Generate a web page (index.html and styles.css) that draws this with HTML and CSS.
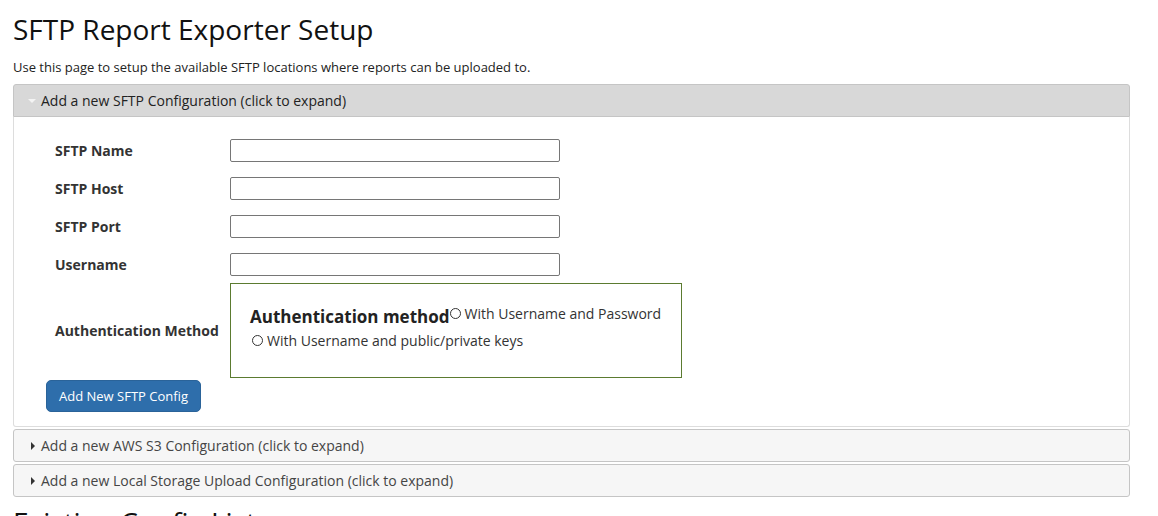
FILE: index.html
```html
<!DOCTYPE html>
<html>
<head>
<meta charset="utf-8">
<link rel="stylesheet" href="styles.css">
</head>
<body>
<div class="page">
  <h1 class="title">SFTP Report Exporter Setup</h1>
  <p class="intro">Use this page to setup the available SFTP locations where reports can be uploaded to.</p>

  <div class="acc">
    <div class="acc-head active"><span class="tri tri-down"></span>Add a new SFTP Configuration (click to expand)</div>
    <div class="acc-body">
      <table class="form">
        <tr><th>SFTP Name</th><td><input class="txt" type="text"></td></tr>
        <tr><th>SFTP Host</th><td><input class="txt" type="text"></td></tr>
        <tr><th>SFTP Port</th><td><input class="txt" type="text"></td></tr>
        <tr><th>Username</th><td><input class="txt" type="text"></td></tr>
        <tr class="auth-row"><th>Authentication Method</th><td>
          <div class="auth">
            <span class="auth-title">Authentication method</span><label class="opt"><span class="radio"></span>With Username and Password</label>
            <label class="opt opt2"><span class="radio"></span>With Username and public/private keys</label>
          </div>
        </td></tr>
      </table>
      <button class="btn">Add New SFTP Config</button>
    </div>
    <div class="acc-head"><span class="tri tri-right"></span>Add a new AWS S3 Configuration (click to expand)</div>
    <div class="acc-head"><span class="tri tri-right"></span>Add a new Local Storage Upload Configuration (click to expand)</div>
  </div>

  <h1 class="title title2">Existing Config List</h1>
</div>
</body>
</html>
```

FILE: styles.css
```css
html, body {
  margin: 0;
  padding: 0;
  background: #fff;
}
body {
  font-family: "Open Sans", "DejaVu Sans", sans-serif;
  color: #222;
}
.page {
  width: 1117px;
  padding: 0 0 0 13px;
}
.title {
  font-size: 28px;
  font-weight: 400;
  color: #111;
  margin: 0;
  padding-top: 11px;
  line-height: 36px;
}
.intro {
  font-size: 13px;
  margin: 12px 0 0 0;
  line-height: 16px;
  color: #222;
}
.acc {
  margin-top: 9px;
}
.acc-head {
  display: flex;
  align-items: center;
  height: 31px;
  border: 1px solid #c5c5c5;
  border-radius: 3px;
  background: #f6f6f6;
  font-size: 14px;
  color: #454545;
  padding-left: 13px;
  margin-top: 2px;
}
.acc-head.active {
  margin-top: 0;
  background: #d8d8d8;
  border-color: #c5c5c5;
  border-radius: 3px 3px 0 0;
  color: #222;
}
.tri {
  display: inline-block;
  width: 0;
  height: 0;
  margin-right: 8px;
}
.tri-down {
  border-left: 4px solid transparent;
  border-right: 4px solid transparent;
  border-top: 4px solid #f4f4f4;
  margin-left: 1px;
  margin-right: 5px;
}
.tri-right {
  border-top: 4px solid transparent;
  border-bottom: 4px solid transparent;
  border-left: 4px solid #333;
  margin-left: 4px;
  margin-right: 6px;
}
.acc-body {
  border: 1px solid #dddddd;
  border-top: 0;
  border-radius: 0 0 3px 3px;
  background: #fff;
  padding: 14px 0 14px 31px;
}
.form {
  border-collapse: separate;
  border-spacing: 0;
}
.form th {
  text-align: left;
  font-size: 14px;
  font-weight: 700;
  color: #333;
  width: 175px;
  padding: 0 0 0 10px;
  height: 38px;
  vertical-align: middle;
}
.form td {
  padding: 0;
  vertical-align: middle;
}
.txt {
  display: block;
  width: 330px;
  height: 23px;
  box-sizing: border-box;
  border: 1px solid #767676;
  border-radius: 2px;
  margin: 0;
  padding: 0 4px;
  font-family: inherit;
}
.auth {
  width: 452px;
  height: 95px;
  box-sizing: border-box;
  border: 1px solid #5b7b30;
  padding: 19px 0 0 19px;
}
.auth-title {
  font-size: 17px;
  font-weight: 700;
  color: #222;
  line-height: 28px;
}
.opt {
  font-size: 14px;
  color: #333;
  display: inline-flex;
  align-items: center;
  position: relative;
  top: -4px;
}
.opt2 {
  display: flex;
  top: 0;
  margin-left: 2px;
}
.radio {
  display: inline-block;
  width: 11px;
  height: 11px;
  box-sizing: border-box;
  border: 1px solid #333;
  border-radius: 50%;
  margin-right: 4px;
}
.btn {
  display: block;
  margin: 2px 0 0 1px;
  width: 155px;
  height: 32px;
  background: #2e6eab;
  border: 1px solid #2a6399;
  border-radius: 5px;
  color: #fff;
  font-family: inherit;
  font-size: 13px;
  padding: 0;
}
.title2 {
  padding-top: 7px;
}
```
